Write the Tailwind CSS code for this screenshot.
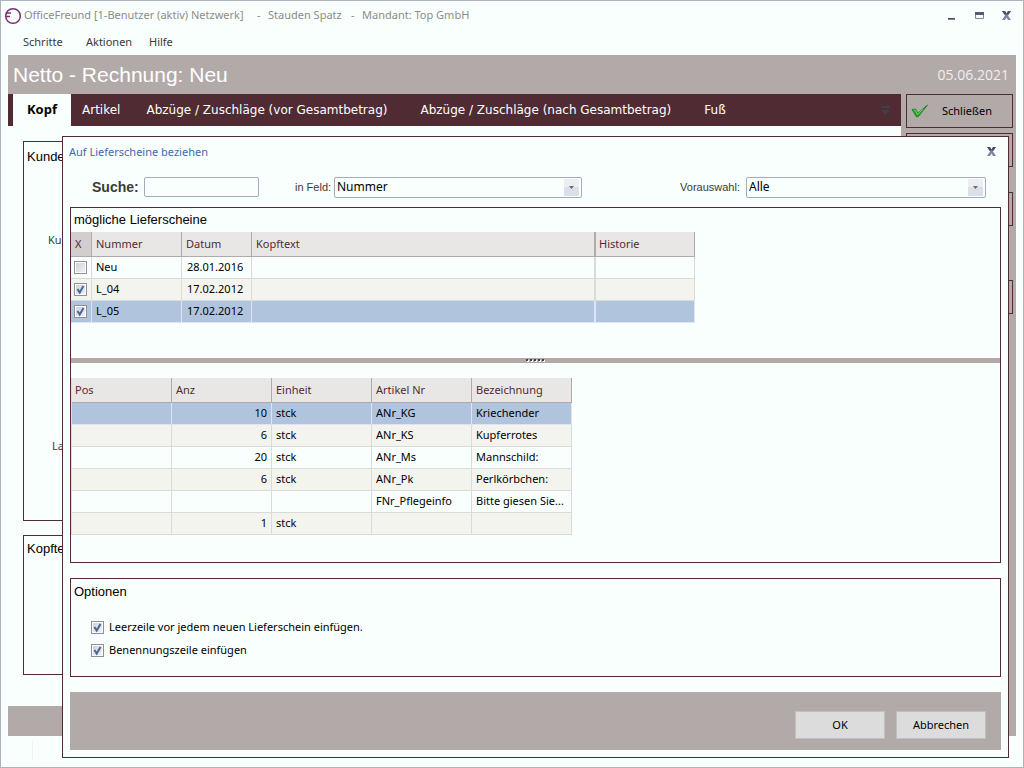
<!DOCTYPE html>
<html lang="de">
<head>
<meta charset="utf-8">
<title>OfficeFreund</title>
<script src="https://cdn.jsdelivr.net/npm/@tailwindcss/browser@4"></script>
</head>
<body class="bg-[#f8fffc]">
<div class="relative flex min-h-screen flex-col border border-[#b2b2be] bg-[#f8fffc] px-[7px] font-['Noto_Sans',sans-serif] text-[11px] text-[#3a3a3a]">

  <!-- Window title -->
  <header class="-mx-1 flex h-[29px] items-center text-[#8c8c8c]">
    <svg class="size-[18px] shrink-0" viewBox="0 0 18 18" fill="none" stroke="#7d2c74"><circle cx="9" cy="9" r="7.300" stroke-width="1.500"/><path d="M2 6h5M2 9.500h4" stroke-width="1.500"/></svg>
    <h1 class="ml-[2px] flex whitespace-nowrap"><span class="w-[233px]">OfficeFreund [1-Benutzer (aktiv) Netzwerk]</span> <span class="w-[11px]">-</span> <span class="w-[83px]">Stauden Spatz</span> <span class="w-[11px]">-</span> <span>Mandant: Top GmbH</span></h1>
    <div class="ml-auto flex items-center gap-3 pr-[5px]">
      <button type="button" aria-label="Minimieren"><svg class="size-4" viewBox="0 0 16 16"><path d="M5 10h7v1H5z" fill="#4a4e60"/><path d="M5 11h7v1H5z" fill="#7c86a4"/></svg></button>
      <button type="button" aria-label="Maximieren"><svg class="size-4" viewBox="0 0 16 16"><path d="M4.500 4.500h8v6h-8z" fill="#f8fffc" stroke="#7c86a4"/><path d="M4 4h9v3H4z" fill="#565b70"/></svg></button>
      <button type="button" aria-label="Fenster schließen"><svg class="size-4" viewBox="0 0 16 16"><path d="M3 3h3l1.500 2.500L9 3h3L9 7.500 12 12H9L7.500 9.500 6 12H3l3-4.500z" fill="#7c86a4"/><path d="M3 3h3l1.500 2.500L9 3h3L9.500 6.500h-4z" fill="#4a4e60"/></svg></button>
    </div>
  </header>

  <!-- Menu -->
  <nav class="flex h-[25px] items-center pl-[15px]">
    <a href="#" class="w-[63px]">Schritte</a>
    <a href="#" class="w-[63px]">Aktionen</a>
    <a href="#">Hilfe</a>
  </nav>

  <div class="flex h-[39px] items-center justify-between bg-[#b2a9a9] pr-[7px] pl-[5px] text-white">
    <h2 class="font-['Liberation_Sans',sans-serif] text-[21px]">Netto - Rechnung: Neu</h2>
    <time class="font-['Open_Sans',sans-serif] text-[14px] text-[#f0eeee]">05.06.2021</time>
  </div>

  <div class="flex h-[642px]">
    <main class="flex min-w-0 flex-1 flex-col">
      <nav class="flex h-8 items-center bg-[#512b33] pl-[5px] font-['DejaVu_Sans',sans-serif] text-[12px] text-white">
        <a href="#" class="flex h-full w-[58px] items-center justify-center bg-[#f8fffc] font-['Noto_Sans',sans-serif] text-[13px] font-bold text-black">Kopf</a>
        <a href="#" class="ml-[11px]">Artikel</a>
        <a href="#" class="ml-[26px]">Abzüge / Zuschläge (vor Gesamtbetrag)</a>
        <a href="#" class="ml-[33px]">Abzüge / Zuschläge (nach Gesamtbetrag)</a>
        <a href="#" class="ml-[33px]">Fuß</a>
        <svg class="mr-2 ml-auto h-4 w-4" viewBox="0 0 16 16" fill="#3c4148"><path d="M4 4h9v2H4zM4 8h9l-4.500 5z"/></svg>
      </nav>
      <div class="flex flex-1 flex-col gap-[14px] px-[15px] pt-[15px]">
        <section class="h-[380px] border border-[#512b33] pl-[3px]">
          <h3 class="pt-[5px] font-['Liberation_Sans',sans-serif] text-[13px] text-black">Kunde</h3>
          <p class="pt-[65px] pl-[21px]">Ku</p>
          <p class="pt-[190px] pl-[25px]">La</p>
        </section>
        <section class="h-[140px] border border-[#512b33] pl-[3px]">
          <h3 class="pt-[3px] font-['Liberation_Sans',sans-serif] text-[13px] text-black">Kopfte</h3>
        </section>
      </div>
      <div class="h-[30px] bg-[#b2a9a9]"></div>
    </main>
    <aside class="w-[115px] bg-[#b2a9a9] pr-[3px] pl-[5px] text-black">
      <button type="button" class="flex h-[34px] w-full items-center border border-[#512b33]">
        <svg class="ml-1 size-[18px]" viewBox="0 0 18 18"><path d="M1 7.500 4.500 7l2.500 4L16.500 3 7.500 14.500 5.500 15z" fill="#22a522" stroke="#14761b" stroke-width=".7"/><path d="m3 8.300 1.200-.2 2.300 4.400L12 7.300" fill="none" stroke="#6bd86b" stroke-width="1"/></svg>
        <span class="ml-[13px]">Schließen</span>
      </button>
      <button type="button" aria-label="Aktion 2" class="mt-[5px] block h-[34px] w-full border border-[#512b33]"></button>
      <button type="button" aria-label="Aktion 3" class="mt-[25px] block h-[34px] w-full border border-[#512b33]"></button>
      <button type="button" aria-label="Aktion 4" class="mt-[54px] block h-[34px] w-full border border-[#512b33]"></button>
    </aside>
  </div>
  <div class="flex flex-1 pt-[5px] pl-6"><span class="h-5 w-px bg-[#f5efee]"></span></div>

  <!-- Dialog -->
  <div role="dialog" aria-labelledby="dlg" class="absolute top-[135px] right-[14px] left-[61px] border border-[#512b33] bg-[#f8fffc] px-[7px] pb-[7px]">
    <div class="flex h-[30px] items-center justify-between pr-[1px]">
      <h2 id="dlg" class="-ml-px text-[#3a6cb4]">Auf Lieferscheine beziehen</h2>
      <button type="button" aria-label="Dialog schließen"><svg class="size-4" viewBox="0 0 16 16"><path d="M3 3h3l1.500 2.500L9 3h3L9 7.500 12 12H9L7.500 9.500 6 12H3l3-4.500z" fill="#7c86a4"/><path d="M3 3h3l1.500 2.500L9 3h3L9.500 6.500h-4z" fill="#4a4e60"/></svg></button>
    </div>
    <div class="flex h-10 items-center pr-[15px] pl-[22px]">
      <label for="s" class="w-[52px] font-['Liberation_Sans',sans-serif] text-[14px] font-bold">Suche:</label>
      <input id="s" type="text" class="h-5 w-[115px] rounded-xs border border-[#a7abb9] px-1">
      <label for="f" class="ml-9 w-[39px] font-['Liberation_Sans',sans-serif] whitespace-nowrap">in Feld:</label>
      <div class="relative h-[21px] w-[248px]">
        <select id="f" class="block size-full appearance-none rounded-xs border border-[#a7abb9] pl-[2px] text-[12px] text-black"><option>Nummer</option></select>
        <svg class="pointer-events-none absolute top-[2px] right-[3px] h-[17px] w-[15px]" viewBox="0 0 15 17"><path d="M0 0h15v8H0z" fill="#edeef2"/><path d="M0 8h15v9H0z" fill="#dcdfe9"/><path d="M5 7h5L7.500 10z" fill="#6f6a66"/></svg>
      </div>
      <label for="v" class="mr-[6px] ml-auto font-['Liberation_Sans',sans-serif]">Vorauswahl:</label>
      <div class="relative h-[21px] w-[240px]">
        <select id="v" class="block size-full appearance-none rounded-xs border border-[#a7abb9] pl-[2px] text-[12px] text-black"><option>Alle</option></select>
        <svg class="pointer-events-none absolute top-[2px] right-[3px] h-[17px] w-[15px]" viewBox="0 0 15 17"><path d="M0 0h15v8H0z" fill="#edeef2"/><path d="M0 8h15v9H0z" fill="#dcdfe9"/><path d="M5 7h5L7.500 10z" fill="#6f6a66"/></svg>
      </div>
    </div>

    <section class="border border-[#512b33] pb-[27px]">
      <h3 class="flex h-6 items-center pl-[3px] font-['Liberation_Sans',sans-serif] text-[13px] text-black">mögliche Lieferscheine</h3>
      <table class="w-[624px] table-fixed border-separate border-spacing-0 text-left text-black [&_td]:h-[22px] [&_td]:border-r [&_td]:border-b [&_td]:border-[#dadada] [&_td]:p-0 [&_td]:pl-1 [&_th]:h-[25px] [&_th]:border-r [&_th]:border-b [&_th]:border-[#b2a9a9] [&_th]:bg-[#e9e7e6] [&_th]:p-0 [&_th]:pl-1 [&_th]:font-normal [&_th]:text-[#512b33]">
        <colgroup><col class="w-[21px]"><col class="w-[90px]"><col class="w-[70px]"><col class="w-[344px]"><col class="w-[99px]"></colgroup>
        <thead><tr><th class="bg-[#d2cecd]!">X</th><th>Nummer</th><th>Datum</th><th class="border-r-2!">Kopftext</th><th class="pl-[3px]!">Historie</th></tr></thead>
        <tbody>
          <tr><td class="pl-[3px]!"><input type="checkbox" aria-label="Neu auswählen" class="block size-[13px] appearance-none border border-[#8f8f95] bg-linear-to-br from-[#cdced6] to-[#f4f4f6] outline-1 -outline-offset-2 outline-white"></td><td>Neu</td><td class="pl-[5px]!">28.01.2016</td><td class="border-r-2!"></td><td></td></tr>
          <tr class="bg-[#f4f4ee]"><td class="pl-[3px]!"><span class="grid size-[13px]"><input type="checkbox" checked aria-label="L_04 auswählen" class="col-start-1 row-start-1 size-[13px] appearance-none border border-[#8f8f95] bg-linear-to-br from-[#cdced6] to-[#f4f4f6] outline-1 -outline-offset-2 outline-white"><svg class="pointer-events-none col-start-1 row-start-1 size-[13px]" viewBox="0 0 13 13"><path d="m3.500 6 2.200 3.500L9.500 3" fill="none" stroke="#46679c" stroke-width="2"/></svg></span></td><td>L_04</td><td class="pl-[5px]!">17.02.2012</td><td class="border-r-2!"></td><td></td></tr>
          <tr class="bg-[#b0c4de] [&>td]:border-[#e0e2f6]!"><td class="pl-[3px]!"><span class="grid size-[13px]"><input type="checkbox" checked aria-label="L_05 auswählen" class="col-start-1 row-start-1 size-[13px] appearance-none border border-[#8f8f95] bg-linear-to-br from-[#cdced6] to-[#f4f4f6] outline-1 -outline-offset-2 outline-white"><svg class="pointer-events-none col-start-1 row-start-1 size-[13px]" viewBox="0 0 13 13"><path d="m3.500 6 2.200 3.500L9.500 3" fill="none" stroke="#46679c" stroke-width="2"/></svg></span></td><td>L_05</td><td class="pl-[5px]!">17.02.2012</td><td class="border-r-2!"></td><td></td></tr>
        </tbody>
      </table>
      <div class="mt-[35px] flex h-[5px] items-center justify-center bg-[#b2a9a9]">
        <svg class="h-[5px] w-5" viewBox="0 0 20 5"><path d="M1 2h2v2H1zm4 0h2v2H5zm4 0h2v2H9zm4 0h2v2h-2zm4 0h2v2h-2z" fill="#fff"/><path d="M0 1h2v2H0zm4 0h2v2H4zm4 0h2v2H8zm4 0h2v2h-2zm4 0h2v2h-2z" fill="#444"/></svg>
      </div>
      <table class="mt-[15px] w-[501px] table-fixed border-separate border-spacing-0 border-l border-[#dadada] text-left text-black [&_td]:h-[22px] [&_td]:truncate [&_td]:border-r [&_td]:border-b [&_td]:border-[#dadada] [&_td]:p-0 [&_td]:pl-1 [&_td:nth-child(2)]:pr-1 [&_td:nth-child(2)]:text-right [&_th]:h-[25px] [&_th]:border-r [&_th]:border-b [&_th]:border-[#b2a9a9] [&_th]:bg-[#e9e7e6] [&_th]:p-0 [&_th]:pl-1 [&_th]:font-normal [&_th]:text-[#512b33]">
        <thead><tr><th class="pl-[3px]!">Pos</th><th>Anz</th><th>Einheit</th><th>Artikel Nr</th><th>Bezeichnung</th></tr></thead>
        <tbody>
          <tr class="bg-[#b0c4de] [&>td]:border-[#e0e2f6]!"><td></td><td>10</td><td>stck</td><td>ANr_KG</td><td>Kriechender</td></tr>
          <tr class="bg-[#f4f4ee]"><td></td><td>6</td><td>stck</td><td>ANr_KS</td><td>Kupferrotes</td></tr>
          <tr><td></td><td>20</td><td>stck</td><td>ANr_Ms</td><td>Mannschild:</td></tr>
          <tr class="bg-[#f4f4ee]"><td></td><td>6</td><td>stck</td><td>ANr_Pk</td><td>Perlkörbchen:</td></tr>
          <tr><td></td><td></td><td></td><td>FNr_Pflegeinfo</td><td>Bitte giesen Sie...</td></tr>
          <tr class="bg-[#f4f4ee]"><td></td><td>1</td><td>stck</td><td></td><td></td></tr>
        </tbody>
      </table>
    </section>

    <section class="mt-[15px] h-[99px] border border-[#512b33]">
      <h3 class="flex h-[25px] items-center pl-[3px] font-['Liberation_Sans',sans-serif] text-[13px] text-black">Optionen</h3>
      <div class="mt-3 flex flex-col pl-5 text-black">
        <label class="flex h-[23px] items-center gap-[5px]"><span class="grid size-[13px]"><input type="checkbox" checked class="col-start-1 row-start-1 size-[13px] appearance-none border border-[#8f8f95] bg-linear-to-br from-[#cdced6] to-[#f4f4f6] outline-1 -outline-offset-2 outline-white"><svg class="pointer-events-none col-start-1 row-start-1 size-[13px]" viewBox="0 0 13 13"><path d="m3.500 6 2.200 3.500L9.500 3" fill="none" stroke="#46679c" stroke-width="2"/></svg></span>Leerzeile vor jedem neuen Lieferschein einfügen.</label>
        <label class="flex h-[23px] items-center gap-[5px]"><span class="grid size-[13px]"><input type="checkbox" checked class="col-start-1 row-start-1 size-[13px] appearance-none border border-[#8f8f95] bg-linear-to-br from-[#cdced6] to-[#f4f4f6] outline-1 -outline-offset-2 outline-white"><svg class="pointer-events-none col-start-1 row-start-1 size-[13px]" viewBox="0 0 13 13"><path d="m3.500 6 2.200 3.500L9.500 3" fill="none" stroke="#46679c" stroke-width="2"/></svg></span>Benennungszeile einfügen</label>
      </div>
    </section>

    <footer class="mt-[15px] flex h-[58px] justify-end gap-[11px] bg-[#b2a9a9] pt-[19px] pr-[15px] text-black">
      <button type="button" class="h-7 w-[90px] border border-[#c0c0c0] bg-[#dcdcdc]">OK</button>
      <button type="button" class="h-7 w-[90px] border border-[#c0c0c0] bg-[#dcdcdc]">Abbrechen</button>
    </footer>
  </div>
</div>
</body>
</html>
